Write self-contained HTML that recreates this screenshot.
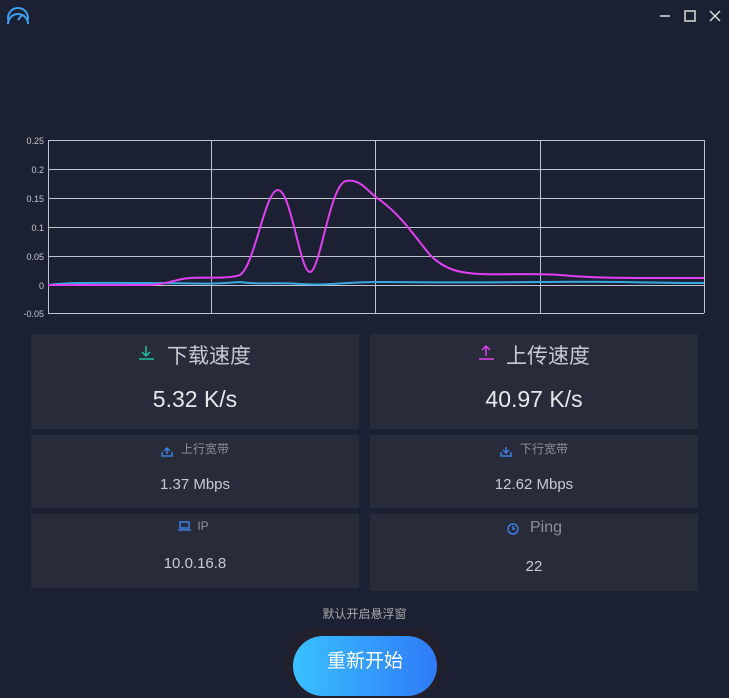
<!DOCTYPE html><html><head><meta charset="utf-8"><style>
body{margin:0;width:729px;height:681px;background:#1b2032;overflow:hidden;font-family:"Liberation Sans","Noto Sans CJK SC",sans-serif;position:relative;color:#c8cad2}
.card{position:absolute;background:#282c3a;text-align:center}
.a{position:absolute;width:100%;left:0;box-sizing:border-box}
svg{z-index:5}
</style></head><body>
<div class="card" style="left:31px;top:334px;width:328px;height:95px"><div class="a" style="top:6px;font-size:21px;padding-left:28px">下载速度</div><div class="a" style="top:52px;font-size:23px;color:#e8e8ec">5.32 K/s</div></div>
<div class="card" style="left:370px;top:334px;width:328px;height:95px"><div class="a" style="top:6px;font-size:21px;padding-left:28px">上传速度</div><div class="a" style="top:52px;font-size:23px;color:#e8e8ec">40.97 K/s</div></div>
<div class="card" style="left:31px;top:435px;width:328px;height:73px"><div class="a" style="top:5px;font-size:12px;color:#8c8f99;padding-left:20px">上行宽带</div><div class="a" style="top:41px;font-size:15px">1.37 Mbps</div></div>
<div class="card" style="left:370px;top:435px;width:328px;height:73px"><div class="a" style="top:5px;font-size:12px;color:#8c8f99;padding-left:20px">下行宽带</div><div class="a" style="top:41px;font-size:15px">12.62 Mbps</div></div>
<div class="card" style="left:31px;top:514px;width:328px;height:74px"><div class="a" style="top:5px;font-size:12px;color:#8c8f99;padding-left:16px">IP</div><div class="a" style="top:41px;font-size:15px">10.0.16.8</div></div>
<div class="card" style="left:370px;top:514px;width:328px;height:77px"><div class="a" style="top:5px;font-size:16px;color:#8c8f99;padding-left:24px">Ping</div><div class="a" style="top:44px;font-size:15px">22</div></div>
<div style="position:absolute;left:0;width:729px;top:605px;text-align:center;font-size:12px;color:#aaa">默认开启悬浮窗</div>
<div style="position:absolute;left:285px;top:628px;width:160px;height:70px;border-radius:35px;background:#22202c"></div>
<div style="position:absolute;left:293px;top:636px;width:144px;height:60px;border-radius:30px;background:linear-gradient(90deg,#3ac0ff,#2f7af8);color:#fff;font-size:19px;text-align:center;line-height:52px">重新开始</div>
<svg style="position:absolute;left:0;top:0" width="729" height="681">
<circle cx="18" cy="18" r="10" fill="none" stroke="#3fa0f0" stroke-width="2"/>
<rect x="6" y="20" width="24" height="10" fill="#1b2032"/>
<path d="M8 24a10 10 0 0 1 20 0" fill="none" stroke="#3fa0f0" stroke-width="2"/>
<path d="M18 20l4-5" stroke="#3fa0f0" stroke-width="2"/>
<path d="M660 16h10M685 11h10v10h-10zM710 11l10 10M720 11l-10 10" stroke="#ddd" stroke-width="1.5" fill="none"/>
<g stroke="#bfc2c8" stroke-width="1">
<path d="M48 140.5h656M48 169.5h656M48 198.5h656M48 227.5h656M48 256.5h656M48 285.5h656M48 313.5h656M48.5 140v173M704.5 140v173M211.5 140v173M375.5 140v173M540.5 140v173"/></g>
<g font-size="9" fill="#c8c8c8" text-anchor="end">
<text x="44" y="144">0.25</text><text x="44" y="173">0.2</text><text x="44" y="202">0.15</text><text x="44" y="231">0.1</text><text x="44" y="260">0.05</text><text x="44" y="289">0</text><text x="44" y="317">-0.05</text></g>
<path d="M48 285C70 282 100 283 150 283S200 285 240 282C260 285 270 282 300 284S340 282 380 282 460 283 540 282 640 283 704 283" stroke="#3aa8e0" stroke-width="2" fill="none"/>
<path d="M48 285L150 285C170 284 175 279 190 278S230 279 240 275C255 265 265 190 278 190S300 272 310 272S330 184 346 181S370 195 380 200C400 215 410 230 430 255C445 270 460 273 480 274S540 273 560 275 600 278 640 278L704 278" stroke="#e040f0" stroke-width="2" fill="none"/>
<g stroke-width="1.5" fill="none">
<path d="M146 346v10M142 352l4 4 4-4M139 359h15" stroke="#20c0a0"/>
<path d="M486 346v10M482 350l4-4 4 4M479 359h15" stroke="#e040f0"/>
<path d="M167 448v6M164 451l3-3 3 3M162 452v4h10v-4" stroke="#3a7ee0"/>
<path d="M506 447v6M503 450l3 3 3-3M501 452v4h10v-4" stroke="#3a7ee0"/>
<path d="M180 522h9v6h-9zM178 530h13" stroke="#3a7ee0"/>
<circle cx="513" cy="529" r="5" stroke="#3a7ee0"/><path d="M513 526v3h2" stroke="#3a7ee0"/>
</g>
</svg>
</body></html>
